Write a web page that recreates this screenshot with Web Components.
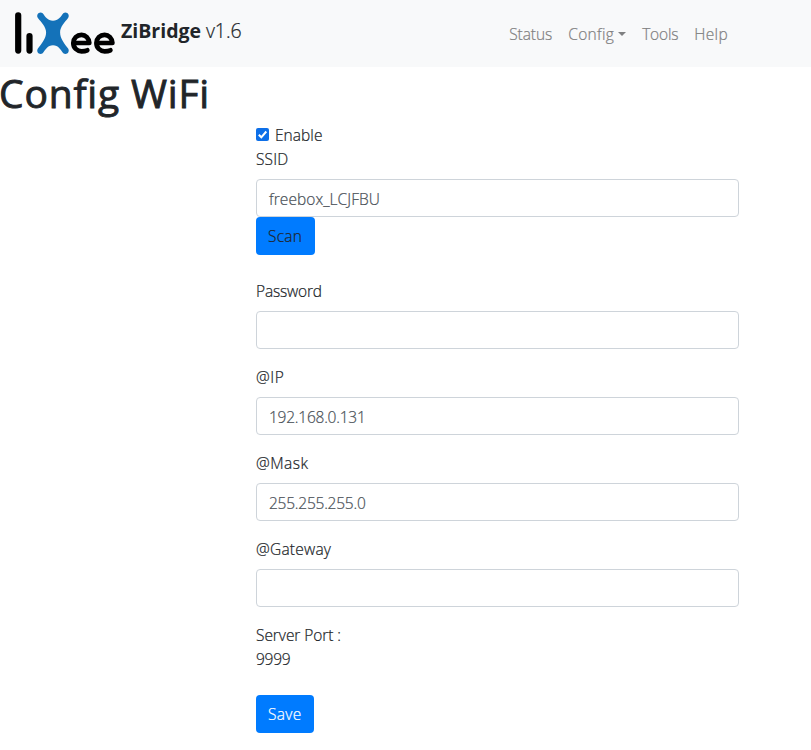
<!DOCTYPE html>
<html lang="en">
<head>
<meta charset="utf-8">
<title>ZiBridge</title>
<style>
body{margin:0;background:#fff;color:#212529;font:300 16px/24px "Open Sans","Noto Sans",sans-serif;-webkit-text-stroke:.22px currentColor}
</style>
</head>
<body>
<zb-page></zb-page>
<script>
const define = (name, html, setup) => customElements.define(name, class extends HTMLElement {
  connectedCallback() {
    if (this.shadowRoot) return;
    const t = document.createElement('template');
    t.innerHTML = html;
    this.attachShadow({mode: 'open'}).append(t.content.cloneNode(true));
    if (setup) setup(this, this.shadowRoot);
  }
});

/* Text whose tracking is adjusted so that its advance equals the w attribute. */
define('zb-text', `<style>:host{display:inline-block;white-space:pre}span{display:inline-block}</style><span><slot></slot></span>`, (el, root) => {
  const w = parseFloat(el.getAttribute('w'));
  if (!w) return;
  const span = root.querySelector('span');
  const n = el.textContent.length;
  span.style.letterSpacing = (w - span.getBoundingClientRect().width) / n + 'px';
});

define('zb-logo', `<style>:host{display:block;width:102px;height:50px}svg{display:block}</style>
<svg width="102" height="50" viewBox="14 8 102 50" fill="none" stroke-linecap="round">
<g stroke="#000" stroke-width="6.2"><path d="M18.2 15.3V50.6M29.5 36V50.6"/></g>
<path fill="#1472b9" d="M37.9 18C35.7 14.8 39.4 10.8 42.7 13.3C45.4 16.8 47.6 20.7 53 20.7C58.4 20.7 60.6 16.8 63.3 13.3C66.6 10.8 70.3 14.8 68.1 18C64.6 22.5 60.1 26.8 60.1 32.3C60.1 38.8 64.6 44 68.1 48.5C70.3 51.8 66.6 55.5 63.3 53.2C60.6 49.7 58.4 45.2 53 45.2C47.6 45.2 45.4 49.7 42.7 53.2C39.4 55.5 35.7 51.8 37.9 48.5C41.4 44 46.1 38.8 46.1 32.3C46.1 26.8 41.4 22.5 37.9 18Z"/>
<g stroke="#000" stroke-width="4.7" stroke-linejoin="round"><path d="M74.5 43H89.3C89 38.3 85.6 34.8 81.5 34.8C77 34.8 73.3 38.5 73.3 43C73.3 47.8 77 51.3 81.5 51.3C84 51.3 85.5 51.1 87.3 50.3"/>
<path d="M97.6 43H112.4C112.1 38.3 108.7 34.8 104.6 34.8C100.1 34.8 96.4 38.5 96.4 43C96.4 47.8 100.1 51.3 104.6 51.3C107.1 51.3 108.6 51.1 110.4 50.3"/></g>
</svg>`);

define('zb-link', `<style>:host{display:flex;align-items:center;padding:8px;color:#7f8081}i{display:none}:host([menu]) i{display:block;margin-left:4px;border:4.8px solid transparent;border-top-color:currentColor;border-bottom:0}</style><slot></slot><i></i>`);

define('zb-header', `<style>:host{display:flex;box-sizing:border-box;height:67px;padding:8px 75px 8px 14px;background:#f8f9fa;justify-content:space-between}
.brand{display:flex;font-size:20px;line-height:30px;color:#212529}.brand zb-text{margin-top:8px}.name{margin-left:5px;font-weight:700;font-size:19.5px;-webkit-text-stroke:0}.ver{margin-left:5px;font-size:19.5px}
nav{display:flex;align-items:center;font-size:15.5px}</style>
<div class="brand"><zb-logo></zb-logo><zb-text class="name" w="80">ZiBridge</zb-text><zb-text class="ver" w="35.5">v1.6</zb-text></div>
<nav><zb-link><zb-text w="43">Status</zb-text></zb-link><zb-link menu><zb-text w="45.9">Config</zb-text></zb-link><zb-link><zb-text w="36.2">Tools</zb-text></zb-link><zb-link><zb-text w="33.7">Help</zb-text></zb-link></nav>`);

define('zb-title', `<style>:host{display:block;height:56px}h1{margin:0 0 0 -1px;font-weight:400;font-size:39px;line-height:52px;-webkit-text-stroke:.9px currentColor}</style><h1><slot></slot></h1>`);

define('zb-field', `<style>:host{display:block}.label{height:24px;margin-bottom:8px}.box{box-sizing:border-box;height:38px;padding:7px 12px 5px;border:1px solid #ced4da;border-radius:4px;color:#495057;background:#fff}</style><div class="label"><slot name="label"></slot></div><div class="box"><slot></slot></div>`);

define('zb-button', `<style>:host{display:block}button{display:block;box-sizing:border-box;height:38px;padding:0 0 0 12px;margin:0;border:0;border-radius:4px;background:#007bff;color:var(--ink,#fff);font:inherit;text-align:left;width:var(--w)}</style><button type="button"><slot></slot></button>`);

define('zb-check', `<style>:host{display:flex;height:24px}svg{margin:5px 6px 0 0}</style><svg width="13" height="13" viewBox="0 0 13 13"><rect width="13" height="13" rx="2" fill="#0d6fe8"/><path d="M2.8 6.8L5.3 9.3L10.3 3.5" fill="none" stroke="#fff" stroke-width="2"/></svg><slot></slot>`);

define('zb-page', `<style>:host{display:block}main{margin-left:256px;width:483px;font-size:15.5px}.group{margin-bottom:16px}.scan{--w:59px;--ink:#212529;margin-bottom:24px}.save{--w:58px;margin-top:24px}.line{height:24px}</style>
<zb-header></zb-header>
<zb-title><zb-text w="211">Config WiFi</zb-text></zb-title>
<main>
<zb-check><zb-text w="47.5">Enable</zb-text></zb-check>
<zb-field><zb-text slot="label" w="32.3">SSID</zb-text><zb-text w="111">freebox_LCJFBU</zb-text></zb-field>
<zb-button class="scan"><zb-text w="34">Scan</zb-text></zb-button>
<zb-field class="group"><zb-text slot="label" w="65.8">Password</zb-text></zb-field>
<zb-field class="group"><zb-text slot="label" w="28.5">@IP</zb-text><zb-text w="96.5">192.168.0.131</zb-text></zb-field>
<zb-field class="group"><zb-text slot="label" w="52.5">@Mask</zb-text><zb-text w="96.5">255.255.255.0</zb-text></zb-field>
<zb-field class="group"><zb-text slot="label" w="75.2">@Gateway</zb-text></zb-field>
<div class="line"><zb-text w="85">Server Port :</zb-text></div>
<div class="line"><zb-text w="34.5">9999</zb-text></div>
<zb-button class="save"><zb-text w="33.5">Save</zb-text></zb-button>
</main>`);
</script>
</body>
</html>
